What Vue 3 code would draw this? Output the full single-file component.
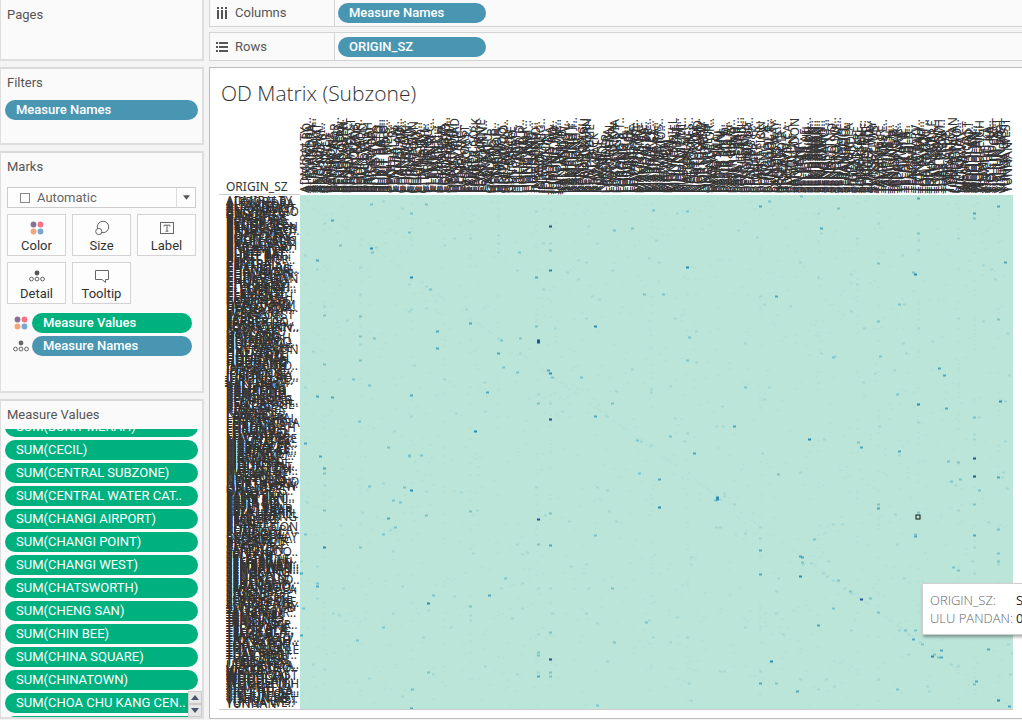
<script setup>
import { ref, onMounted } from 'vue'

const subzones = `ADMIRALTY|AIRPORT ROAD|ALEXANDRA HILL|ALEXANDRA NORTH|ALJUNIED|ANAK BUKIT|ANCHORVALE|ANG MO KIO TOWN CENTRE|ANSON|BALESTIER|BANGKIT|BAYFRONT SUBZONE|BAYSHORE|BEDOK NORTH|BEDOK RESERVOIR|BEDOK SOUTH|BENCOOLEN|BENDEMEER|BENOI SECTOR|BIDADARI|BISHAN EAST|BOAT QUAY|BOON KENG|BOON LAY PLACE|BOON TECK|BOULEVARD|BRADDELL|BRAS BASAH|BRICKLAND|BRICKWORKS|BUGIS|BUKIT BATOK CENTRAL|BUKIT BATOK EAST|BUKIT BATOK SOUTH|BUKIT BATOK WEST|BUKIT HO SWEE|BUKIT MERAH|CECIL|CENTRAL SUBZONE|CENTRAL WATER CATCHMENT|CHANGI AIRPORT|CHANGI POINT|CHANGI WEST|CHATSWORTH|CHENG SAN|CHIN BEE|CHINA SQUARE|CHINATOWN|CHOA CHU KANG CENTRAL|CHOA CHU KANG NORTH|CHONG BOON|CITY HALL|CITY TERMINALS|CLARKE QUAY|CLEMENTI CENTRAL|CLEMENTI NORTH|CLEMENTI WEST|CLEMENTI WOODS|CLEANTECH|CLIFFORD PIER|COMPASSVALE|CORONATION ROAD|CRAWFORD|DAIRY FARM|DEFU INDUSTRIAL PARK|DEPOT ROAD|DHOBY GHAUT|DOVER|DUNEARN|EAST COAST|EVERTON PARK|FABER|FAJAR|FARRER COURT|FARRER PARK|FERNVALE|FLORA DRIVE|FORT CANNING|FRANKEL|GALI BATU|GARDEN|GEYLANG BAHRU|GEYLANG EAST|GHIM MOH|GOMBAK|GOODWOOD PARK|GREENWOOD PARK|GUILIN|GUL BASIN|GUL CIRCLE|HENDERSON HILL|HILLCREST|HILLVIEW|HOLLAND DRIVE|HOLLAND ROAD|HONG KAH|HONG KAH NORTH|HOUGANG CENTRAL|HOUGANG EAST|HOUGANG WEST|INSTITUTION HILL|INTERNATIONAL BUSINESS PARK|ISTANA NEGARA|JELEBU|JOO KOON|JOO SENG|JURONG GATEWAY|JURONG PORT|JURONG RIVER|JURONG WEST CENTRAL|KAKI BUKIT|KALLANG BAHRU|KALLANG WAY|KAMPONG BUGIS|KAMPONG GLAM|KAMPONG JAVA|KAMPONG TIONG BAHRU|KAMPONG UBI|KANGKAR|KATONG|KEAT HONG|KEBUN BARU|KEMBANGAN|KENT RIDGE|KHATIB|KIAN TECK|KIM KEAT|KOVAN|KRANJI|LAKESIDE|LAVENDER|LEEDON PARK|LEONIE HILL|LIM CHU KANG|LITTLE INDIA|LOKYANG|LORONG 8 TOA PAYOH|LORONG AH SOO|LORONG CHUAN|LORONG HALUS|LOWER SELETAR|LOYANG EAST|LOYANG WEST|MACPHERSON|MACRITCHIE|MALCOLM|MANDAI EAST|MANDAI ESTATE|MANDAI WEST|MARGARET DRIVE|MARINA CENTRE|MARINA EAST|MARINE PARADE|MARITIME SQUARE|MARYMOUNT|MATILDA|MAXWELL|MEI CHIN|MIDVIEW|MONK'S HILL|MOUNT PLEASANT|MOUNTBATTEN|MOULMEIN|MOUNT EMILY|NASSIM|NATIONAL UNIVERSITY|NATURE RESERVE|NEE SOON|NEWTON CIRCUS|NORTH COAST|NORTHLAND|NORTHSHORE|NORTHVIEW|ONE NORTH|ONE TREE HILL|ORANGE GROVE|OXLEY|PANDAN|PANG SUA|PASIR PANJANG 1|PASIR PANJANG 2|PASIR RIS CENTRAL|PASIR RIS DRIVE|PASIR RIS PARK|PASIR RIS WEST|PATERSON|PAYA LEBAR EAST|PAYA LEBAR NORTH|PAYA LEBAR WEST|PEARL'S HILL|PEI CHUN|PENG SIANG|PENJURU CRESCENT|PEOPLE'S PARK|PHILLIP|PIONEER SECTOR|PLAB|PLANTATION|PORT|POTONG PASIR|PUNGGOL CANAL|PUNGGOL FIELD|PUNGGOL TOWN CENTRE|QUEENSWAY|RAFFLES PLACE|REDHILL|RESERVOIR VIEW|RIDOUT|RIVERVALE|ROCHOR CANAL|SAFTI|SAMULUN|SARANGOON|SAUJANA|SELEGIE|SELETAR|SELETAR AEROSPACE PARK|SELETAR HILLS|SEMBAWANG CENTRAL|SEMBAWANG EAST|SEMBAWANG HILLS|SEMBAWANG NORTH|SEMBAWANG SPRINGS|SEMBAWANG STRAITS|SENGKANG TOWN CENTRE|SENGKANG WEST|SENJA|SENNETT|SENOKO NORTH|SENOKO SOUTH|SENOKO WEST|SENTOSA|SERANGOON CENTRAL|SERANGOON GARDEN|SERANGOON NORTH|SHANGRI-LA|SHIPYARD|SIGLAP|SIMEI|SINGAPORE POLYTECHNIC|SOMERSET|SOUTHERN GROUP|SPRINGLEAF|STRAITS VIEW|SUNGEI ROAD|SUNSET WAY|SWISS CLUB|TAGORE|TAI SENG|TAMAN JURONG|TAMPINES EAST|TAMPINES NORTH|TAMPINES WEST|TANGLIN HALT|TANJONG PAGAR|TANJONG RHU|TEBAN GARDENS|TECH PARK|TECK WHYE|TELOK BLANGAH DRIVE|TELOK BLANGAH RISE|TELOK BLANGAH WAY|TENGAH|TENGEH|THE WHARVES|TIONG BAHRU|TIONG BAHRU STATION|TOA PAYOH CENTRAL|TOA PAYOH WEST|TOH GUAN|TOH TUCK|TOWNSVILLE|TRAFALGAR|TUAS BAY|TUAS NORTH|TUAS PROMENADE|TUAS VIEW|TURF CLUB|TYERSALL|TYRWHITT|ULU PANDAN|UPPER PAYA LEBAR|UPPER THOMSON|VICTORIA|WATERWAY EAST|WENYA|WEST COAST|WOODGROVE|WOODLANDS EAST|WOODLANDS REGIONAL CENTRE|WOODLANDS SOUTH|WOODLANDS WEST|WOODLEIGH|XILIN|YEW TEE|YIO CHU KANG|YIO CHU KANG EAST|YIO CHU KANG WEST|YISHUN CENTRAL|YISHUN EAST|YISHUN SOUTH|YISHUN WEST|YUHUA EAST|YUHUA WEST|YUNNAN`.split('|')

const measures = [
  'BUKIT MERAH', 'CECIL', 'CENTRAL SUBZONE', 'CENTRAL WATER CAT..', 'CHANGI AIRPORT', 'CHANGI POINT',
  'CHANGI WEST', 'CHATSWORTH', 'CHENG SAN', 'CHIN BEE', 'CHINA SQUARE', 'CHINATOWN',
  'CHOA CHU KANG CEN..', 'CHOA CHU KANG NORTH'
].map(n => (n.endsWith('..') ? `SUM(${n}` : `SUM(${n})`))

const rowLabels = ref(subzones)
const colLabels = ref(subzones)

onMounted(() => {
  const ctx = document.createElement('canvas').getContext('2d')
  ctx.font = '12px "Noto Sans"'
  const width = s => ctx.measureText(s).width
  const clip = (s, max) => {
    if (width(s) <= max) return s
    let t = s
    while (width(t + '..') > max) t = t.slice(0, -1)
    return t + '..'
  }
  const wrap = (s, max) => {
    if (width(s) <= max) return s
    const words = s.split(' ')
    while (words.length > 1 && width(words.join(' ')) > max) words.pop()
    const line = words.join(' ')
    return width(line) < 50 ? clip(s, max) : clip(line, max)
  }
  rowLabels.value = subzones.map(s => wrap(s, 74))
  colLabels.value = subzones.map(s => clip(s, 76))
})

// Trip volume per cell: x y, grouped by intensity step
const steps = [
  ['v1', `383 201 402 208 324 223 376 247 305 255 317 269 360 267 360 294 324 306 411 309 409 311 347 320 360 344 313 351 414 365 339 379 305 387 411 416 394 431 324 485 383 483 390 530 307 502 362 512 340 525 393 551 301 561 317 566 343 588 402 586 317 598 333 613 339 615 393 613 313 664 324 669 369 678 402 696
498 235 536 211 454 238 470 238 444 245 498 243 498 252 550 243 543 243 597 243 677 213 588 226 738 230 757 237 656 240 649 258 659 262 586 262 578 260 567 272 517 270 543 289 578 279 409 284 426 286 592 296 599 299 760 296 764 304 426 308 466 309 612 270 555 328 586 318 675 318 498 338 696 331 745 343 520 353 696 362 632 369 484 382 444 379 538 394 550 403 607 416 670 386 651 389 651 392 616 391 769 387 764 399 722 406 675 418 562 411 456 413 485 411 716 426 723 426 684 441 687 433 651 445 762 453 641 441
536 487 426 491 461 492 597 487 607 490 477 510 545 515 609 511 569 521 616 521 720 499 724 496 724 493 716 527 720 527 734 504 760 527 760 538 745 533 517 544 522 554 527 552 473 553 586 564 571 566 522 583 501 588 538 588 550 588 588 588 691 557 691 564 454 596 428 610 470 615 470 620 522 608 512 618 552 613 586 613 649 620 653 637 451 627 423 637 597 623 538 634 670 642 677 617 745 627 687 637 607 661 485 666 538 672 433 674 517 674 720 671 724 671 760 671 689 683 691 700 412 689 776 591 776 613 778 578
818 213 821 233 878 223 918 240 918 250 857 238 958 238 902 255 800 262 983 265 991 269 995 279 851 274 857 284 904 304 851 311 790 306 958 318 983 321 918 328 1007 333 864 328 818 277 821 353 955 485 1007 488 958 510 895 514 897 544 974 547 988 522 833 524 842 524 803 564 811 563 828 561 823 573 827 576 833 580 844 588 851 593 904 578 972 561 998 564 974 573 783 634 851 630 899 630 908 634 920 642 908 654 951 664 958 666 1008 644 1012 653 800 679 826 679 834 686 878 679 927 686 929 691 1010 674 818 689
903 343 932 341 835 356 906 353 894 370 875 373 863 382 1005 401 979 417 918 422 824 439 899 455 974 434 974 439 1002 477 1003 472 1005 441 800 472 1009 375 879 426`],
  ['v2', `371 204 411 213 409 232 340 245 372 252 324 315 360 316 374 338 360 336 324 364 360 360 353 379 369 385 359 421 388 447 409 456 324 473 369 486 404 487 393 500 400 502 324 510 395 527 305 534 383 534 360 547 317 583 303 608 383 627 357 640 412 689
426 204 519 252 550 250 614 230 632 228 653 210 687 211 769 201 430 289 644 294 663 294 536 326 520 338 501 340 689 337 517 372 503 367 552 377 581 377 687 360 538 403 612 403 745 387 637 440 670 436 409 455 421 455 639 473 778 474 470 511 426 515 550 513 595 535 715 500 538 544 505 578 612 588 433 595 470 606 646 622 614 642 550 632 538 652 538 655 550 672 550 676 428 672 776 683 597 705
801 196 838 208 974 218 918 233 878 263 913 272 899 304 878 321 998 319 979 490 951 481 974 504 878 504 918 512 915 534 998 529 814 539 802 562 838 580 850 591 870 598 833 608 878 612 953 567 958 570 998 553 998 561 905 630 915 630 922 644 934 654 938 657 974 684 897 689 833 357 880 356 897 394 974 417 858 442 948 461 958 462 960 479`],
  ['v3', `332 220 317 260 317 396 332 397 411 395 305 443 320 456 324 468 388 518 317 586 301 573 301 635 411 708
760 206 536 277 776 296 470 323 437 331 437 348 498 353 548 370 487 392 595 416 734 426 694 453 659 479 550 545 760 550 760 574 489 595 538 676 760 683
918 198 821 228 974 213 998 206 1005 262 878 508 915 536 974 535 800 556 802 557 818 625 913 639 941 650 941 657 988 649 976 681 797 691 1009 706 939 368 944 375 946 408 861 447 899 451 998 477`],
  ['v4', `371 248 411 277 411 490 324 547 687 267 550 270 595 326 550 373 475 431 659 507 717 497 717 499 428 603 771 661 915 274 800 576 932 656 998 700 918 404 1000 401 809 439`],
  ['v5', `550 226 538 340 538 342 550 419 538 519 550 659 861 599 974 458 974 476`]
]

const toPath = (list, w, h) => list.map(([x, y]) => `M${x - w / 2} ${y - h / 2}h${w}v${h}h${-w}z`).join('')
const layers = steps.map(([cls, text]) => {
  const n = text.split(/\s+/).map(Number)
  const pts = []
  for (let i = 0; i < n.length; i += 2) pts.push([n[i] + 0.5, n[i + 1] + 0.5])
  return { cls, d: toPath(pts, 3, 2) }
})

// Low-volume cells scattered over the grid, denser on busy destinations
let seed = 71
const rnd = () => ((seed = (seed * 16807) % 2147483647) / 2147483647)
const busy = [324, 360, 411, 444, 470, 498, 536, 550, 651, 687, 760, 818, 857, 878, 918, 958, 974, 998]
const faint = []
for (let i = 0; i < 1700; i++) {
  const x = rnd() < 0.3 ? busy[Math.floor(rnd() * busy.length)] : 301 + Math.floor(rnd() * 709)
  faint.push([x + 0.5, 197 + Math.floor(rnd() * 510)])
}
for (let i = 0; i < 150; i++) {
  const t = rnd()
  faint.push([303 + t * 705, 197 + t * 508])
}
layers.unshift({ cls: 'v0', d: toPath(faint, 3, 2) })
</script>

<template>
  <div class="app">
    <aside class="side">
      <section class="card pages"><h2>Pages</h2></section>
      <section class="card filters">
        <h2>Filters</h2>
        <button class="pill blue">Measure Names</button>
      </section>
      <section class="card marks">
        <h2>Marks</h2>
        <div class="picker">
          <svg class="box" viewBox="0 0 10 10"><rect x=".5" y=".5" width="9" height="9" /></svg>
          <select aria-label="Mark type"><option>Automatic</option></select>
          <span class="drop"><svg viewBox="0 0 8 5"><path d="M0 0h8L4 5z" /></svg></span>
        </div>
        <div class="buttons">
          <button>
            <svg viewBox="0 0 16 16"><g stroke="none"><circle cx="4.5" cy="4.5" r="2.9" fill="#86709c" /><circle cx="11.5" cy="4.5" r="2.9" fill="#fa7087" /><circle cx="4.5" cy="11.5" r="2.9" fill="#f3a679" /><circle cx="11.5" cy="11.5" r="2.9" fill="#7ba4cf" /></g></svg>
            Color
          </button>
          <button>
            <svg viewBox="0 0 16 16"><circle cx="9" cy="7" r="5.7" /><circle class="solid" cx="4.8" cy="11.5" r="3.1" /></svg>
            Size
          </button>
          <button>
            <svg viewBox="0 0 16 16"><rect x="1.5" y="2.5" width="13" height="11" /><path d="M5 6.5V5.2h6v1.3M8 5.2v6M6.6 11.2h2.8" /></svg>
            Label
          </button>
          <button>
            <svg viewBox="0 0 16 16"><circle cx="8" cy="5" r="2.4" fill="#555" stroke="none" /><circle cx="2.5" cy="11" r="1.9" /><circle cx="8" cy="11" r="1.9" /><circle cx="13.5" cy="11" r="1.9" /></svg>
            Detail
          </button>
          <button>
            <svg viewBox="0 0 16 16"><path d="M1.5 2.5h13v9h-3v3l-3.500-3h-6.500z" /></svg>
            Tooltip
          </button>
        </div>
        <div class="encoding">
          <svg viewBox="0 0 16 16"><g stroke="none"><circle cx="4.5" cy="4.5" r="2.9" fill="#86709c" /><circle cx="11.5" cy="4.5" r="2.9" fill="#fa7087" /><circle cx="4.5" cy="11.5" r="2.9" fill="#f3a679" /><circle cx="11.5" cy="11.5" r="2.9" fill="#7ba4cf" /></g></svg>
          <button class="pill green">Measure Values</button>
        </div>
        <div class="encoding">
          <svg viewBox="0 0 16 16"><circle cx="8" cy="5" r="2.4" fill="#666" stroke="none" /><circle cx="2.5" cy="11" r="1.9" /><circle cx="8" cy="11" r="1.9" /><circle cx="13.5" cy="11" r="1.9" /></svg>
          <button class="pill blue">Measure Names</button>
        </div>
      </section>
      <section class="card values">
        <h2>Measure Values</h2>
        <div class="scroller">
          <ul>
            <li v-for="m in measures" :key="m"><button class="pill green">{{ m }}</button></li>
          </ul>
          <div class="spin">
            <button aria-label="Scroll up"><svg viewBox="0 0 8 5"><path d="M0 5h8L4 0z" /></svg></button>
            <button aria-label="Scroll down"><svg viewBox="0 0 8 5"><path d="M0 0h8L4 5z" /></svg></button>
          </div>
        </div>
      </section>
    </aside>

    <main class="main">
      <section class="shelf first">
        <h2><svg viewBox="0 0 12 12"><path d="M1 0h2v2H1zM5 0h2v2H5zM9 0h2v2H9zM1 3h2v9H1zM5 3h2v9H5zM9 3h2v9H9z" /></svg>Columns</h2>
        <button class="pill blue">Measure Names</button>
      </section>
      <section class="shelf">
        <h2><svg viewBox="0 0 12 12"><path d="M0 1h2v2H0zM0 5h2v2H0zM0 9h2v2H0zM3 1h9v2H3zM3 5h9v2H3zM3 9h9v2H3z" /></svg>Rows</h2>
        <button class="pill blue">ORIGIN_SZ</button>
      </section>
      <section class="view">
        <h1>OD Matrix (Subzone)</h1>
        <div class="chart">
          <div class="corner">ORIGIN_SZ</div>
          <div class="cols"><div v-for="(c, i) in colLabels" :key="i"><span>{{ c }}</span></div></div>
          <div class="rows"><div v-for="(r, i) in rowLabels" :key="i"><span>{{ r }}</span></div></div>
          <div class="matrix">
            <svg viewBox="300 195 713 514" preserveAspectRatio="none" role="img" aria-label="Trips by subzone">
              <path v-for="l in layers" :key="l.cls" :class="l.cls" :d="l.d" />
              <rect class="picked" x="916" y="515" width="4" height="4" />
            </svg>
          </div>
        </div>
        <div class="tip">
          <span>ORIGIN_SZ:</span><b>SENTOSA</b>
          <span>ULU PANDAN:</span><b>0</b>
        </div>
      </section>
    </main>
  </div>
</template>

<style>
html, body { height: 100%; overflow: hidden; }
body { margin: 0; }
</style>

<style scoped>
* { box-sizing: border-box; }
.app {
  display: flex;
  height: 100vh;
  overflow: hidden;
  background: #f4f4f4;
  color: #555;
  font: 13px/18px Roboto, "Liberation Sans", sans-serif;
}
button { font: inherit; margin: 0; padding: 0; cursor: pointer; }
h1, h2 { margin: 0; font-weight: 400; }
h2 { font-size: 13px; line-height: 18px; }
.side { display: flex; flex-direction: column; gap: 6px; width: 204px; flex: none; padding-bottom: 1px; }
.card { border: 2px solid #dedede; border-left-width: 1px; border-top-color: #dadada; background: #fafafa; padding: 5px 4px 0 4px; }
.card h2 { padding-left: 2px; }
.pages { height: 61px; border-top: 0; padding-top: 6px; }
.filters { height: 78px; }
.marks { height: 242px; }
.values { flex: 1; min-height: 0; display: flex; flex-direction: column; padding-right: 0; }
.pill {
  display: block;
  width: 100%;
  height: 20px;
  border: 0;
  border-radius: 10px;
  padding: 0 10px 0 11px;
  color: #fff;
  text-align: left;
  white-space: nowrap;
  overflow: hidden;
  font-weight: 500;
  line-height: 20px;
}
li .pill { font-weight: 400; }
.blue { background: #4996b2; }
.green { background: #00b180; }
.filters .pill { margin-top: 8px; }
.picker { display: flex; align-items: center; height: 21px; margin: 11px 2px 6px; border: 1px solid #ccc; background: #fdfdfd; }
.box { width: 10px; height: 10px; margin-left: 12px; fill: none; stroke: #888; flex: none; }
.picker select { appearance: none; flex: 1; min-width: 0; height: 19px; border: 0; padding: 0 0 0 7px; background: none; color: #666; font: inherit; }
.drop { display: flex; align-items: center; justify-content: center; width: 19px; height: 19px; border-left: 1px solid #ddd; }
.drop svg { width: 7px; height: 5px; fill: #555; }
.buttons { display: grid; grid-template-columns: repeat(3, 1fr); gap: 6px; margin: 0 2px; }
.buttons button { display: flex; flex-direction: column; align-items: center; height: 42px; padding-top: 5px; border: 1px solid #d3d3d3; background: #fdfdfd; color: #333; line-height: 18px; gap: 1px; }
.buttons svg, .encoding svg { width: 16px; height: 16px; flex: none; fill: none; stroke: #666; stroke-width: 1; }
.buttons .solid { fill: #fdfdfd; }
.encoding { display: flex; align-items: center; gap: 3px; margin: 3px 6px 0 8px; }
.buttons + .encoding { margin-top: 9px; }
.scroller { position: relative; flex: 1; min-height: 0; overflow: hidden; margin-top: 5px; padding-right: 4px; }
ul { list-style: none; margin: -12px 0 0; padding: 0; }
li { margin-bottom: 3px; }
.spin { position: absolute; right: 0; bottom: 0; width: 14px; }
.spin button { display: flex; align-items: center; justify-content: center; width: 14px; height: 13px; border: 1px solid #ccc; background: #e6e6e6; }
.spin svg { width: 8px; height: 5px; fill: #465670; }

.main { flex: 1; min-width: 0; display: flex; flex-direction: column; gap: 5px; margin-left: 5px; padding-bottom: 1px; }
.shelf { display: flex; align-items: center; height: 29px; border: 1px solid #d4d4d4; border-right: 0; background: #fafafa; }
.shelf.first { height: 27px; border-top: 0; }
.shelf h2 { display: flex; align-items: center; gap: 7px; width: 125px; align-self: stretch; padding-left: 6px; border-right: 1px solid #d4d4d4; margin-right: 3px; }
.shelf h2 svg { width: 12px; height: 12px; fill: #555; }
.shelf .pill { width: 148px; }
.view { position: relative; flex: 1; min-height: 0; display: flex; flex-direction: column; overflow: hidden; margin-top: 1px; padding: 10px 9px 8px 9px; border: 1px solid #bbb; border-right: 0; background: #fff; }
h1 { padding-left: 2px; font: 300 21px/30px "Open Sans", sans-serif; color: #333; }
.chart { flex: 1; min-height: 0; display: grid; grid-template: 87px minmax(0, 1fr) / 81px minmax(0, 1fr); font: 12px/14px "Noto Sans", "Open Sans", sans-serif; color: #333; }
.corner { align-self: end; padding-left: 7px; border-bottom: 1px solid #ccc; }
.cols { display: flex; align-items: flex-end; padding: 0 4px 2px; }
.cols div { flex: 1 1 0; min-width: 0; display: flex; justify-content: center; }
.cols span { flex: none; writing-mode: vertical-rl; transform: rotate(180deg); white-space: nowrap; }
.rows { display: flex; flex-direction: column; padding: 5px 0 3px 7px; border-bottom: 1px solid #ccc; }
.rows div { flex: 1 1 0; min-height: 0; display: flex; align-items: center; }
.rows span { flex: none; white-space: nowrap; }
.matrix { background: #bce5d9; border-bottom: 1px solid #ccc; min-height: 0; }
.matrix svg { display: block; width: 100%; height: 100%; }
.v0 { fill: #b6e1d7; }
.v1 { fill: #a2d7d3; }
.v2 { fill: #7cc3ca; }
.v3 { fill: #4ea9be; }
.v4 { fill: #2b8db0; }
.v5 { fill: #20558f; }
.picked { fill: #bce5d9; stroke: #111; stroke-width: 1; }
.tip {
  position: absolute;
  right: -60px;
  bottom: 83px;
  display: grid;
  grid-template-columns: 84px 1fr;
  width: 160px;
  padding: 7px;
  border: 1px solid #d0d0d0;
  background: #fff;
  box-shadow: 1px 2px 3px rgba(0, 0, 0, 0.35);
  font: 300 13px/18px "Open Sans", sans-serif;
  color: #666;
  white-space: nowrap;
}
.tip b { font-weight: 400; color: #222; padding-left: 2px; }
</style>
